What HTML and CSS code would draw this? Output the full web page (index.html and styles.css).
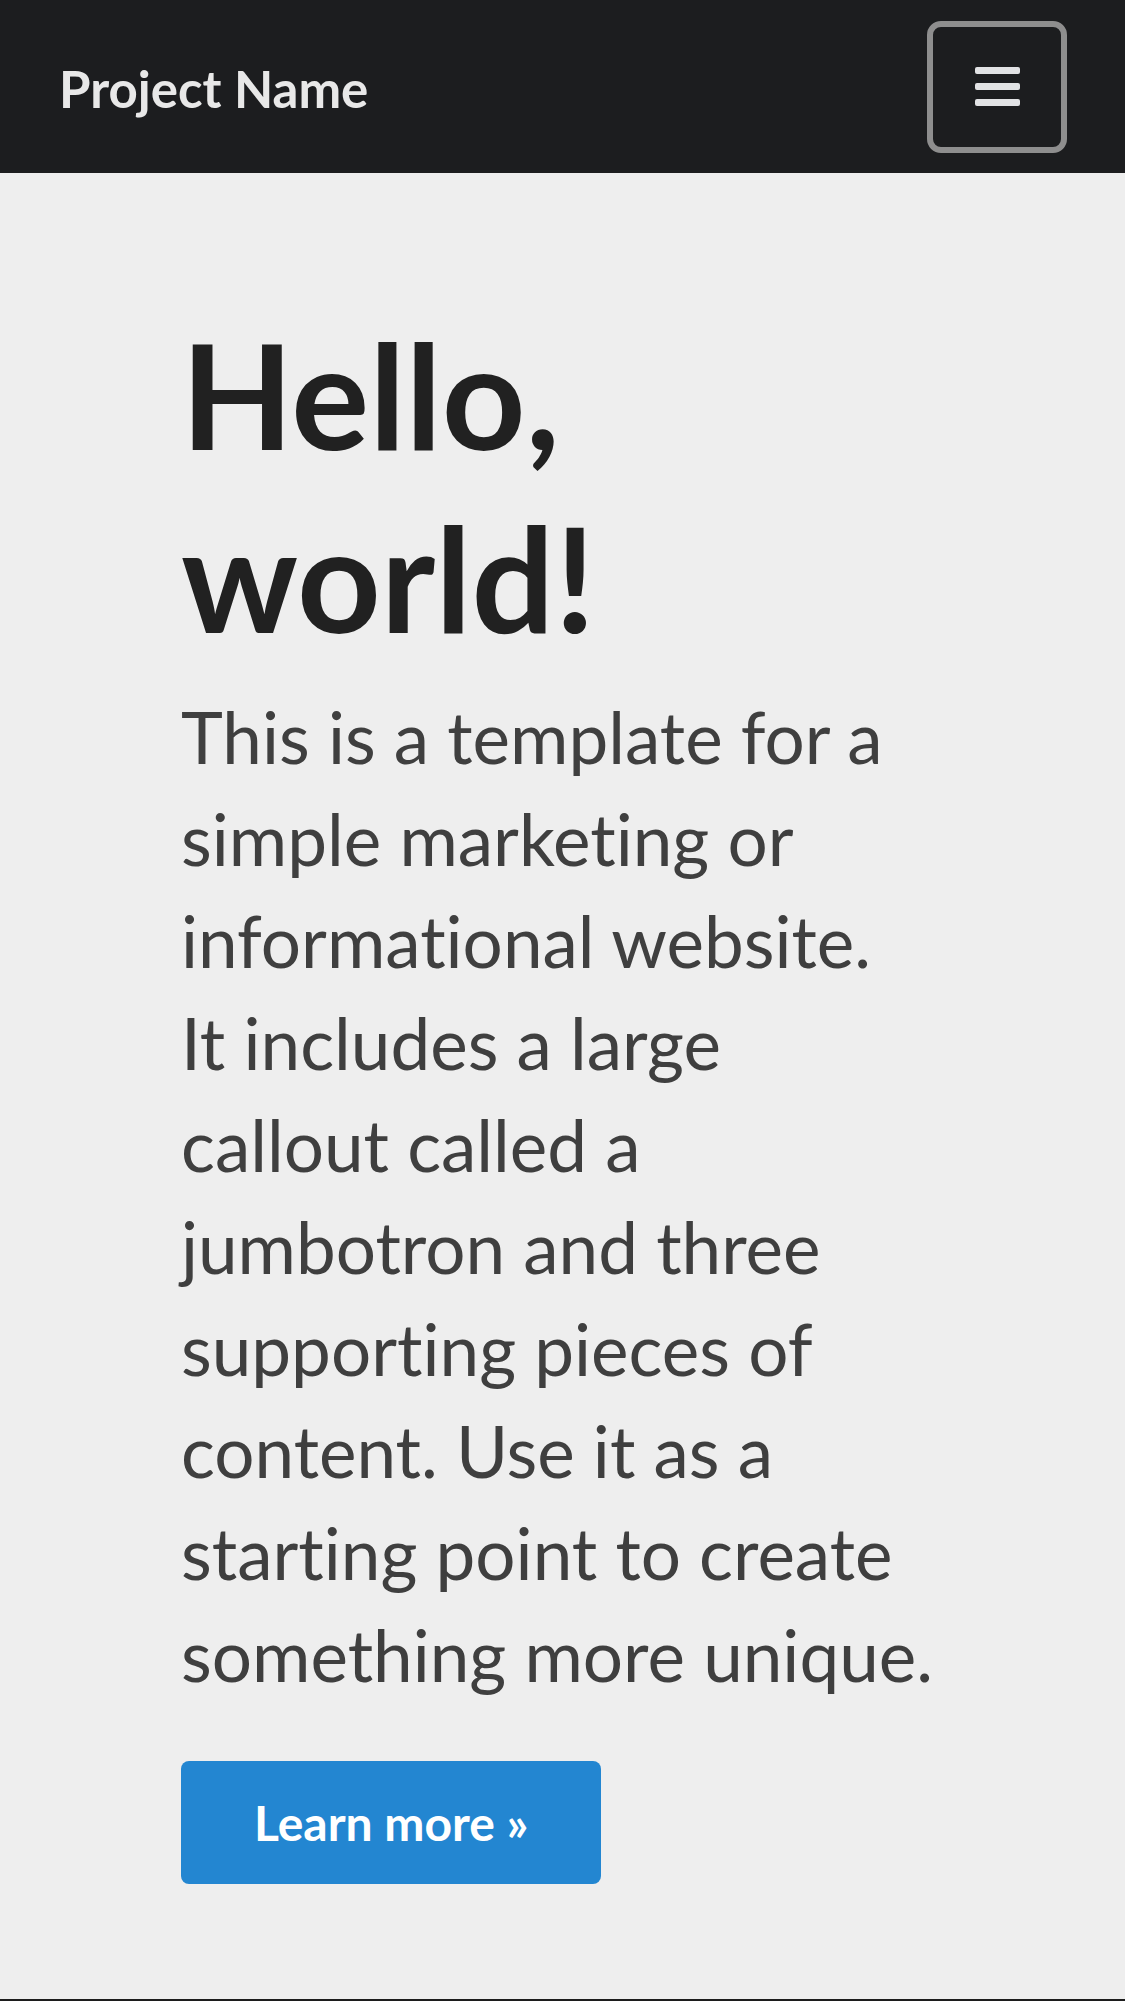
FILE: index.html
```html
<!DOCTYPE html>
<html lang="en">
<head>
<meta charset="utf-8">
<title>Project Name</title>
<link rel="stylesheet" href="styles.css">
</head>
<body>
<nav class="navbar">
  <a class="brand" href="#">Project Name</a>
  <button class="toggler" type="button" aria-label="Toggle navigation">
    <span class="bar"></span>
    <span class="bar"></span>
    <span class="bar"></span>
  </button>
</nav>
<main class="jumbotron">
  <div class="container">
    <h1 class="title">Hello, world!</h1>
    <p class="lead">This is a template for a simple marketing or informational website. It includes a large callout called a jumbotron and three supporting pieces of content. Use it as a starting point to create something more unique.</p>
    <a class="btn" href="#">Learn more &raquo;</a>
  </div>
</main>
<div class="next-section"></div>
</body>
</html>
```
FILE: styles.css
```css
html, body {
  margin: 0;
  padding: 0;
}
body {
  background: #eeeeee;
  font-family: Lato, "Open Sans", "Liberation Sans", sans-serif;
  font-variant-ligatures: none;
}
.navbar {
  height: 173px;
  box-sizing: border-box;
  background: #1c1d1f;
  display: flex;
  align-items: center;
  justify-content: space-between;
  padding: 0 58px 0 59px;
}
.brand {
  color: #e8e8e8;
  text-decoration: none;
  font-weight: 700;
  font-size: 51px;
  line-height: 60px;
  margin-top: 4px;
}
.toggler {
  width: 140px;
  height: 132px;
  box-sizing: border-box;
  border: 6px solid #8e8e8e;
  border-radius: 14px;
  background: transparent;
  display: flex;
  flex-direction: column;
  align-items: center;
  justify-content: center;
  gap: 9px;
  padding: 0;
}
.bar {
  display: block;
  width: 45px;
  height: 7px;
  border-radius: 2px;
  background: #e1e2e4;
}
.jumbotron {
  padding: 129px 0 115px;
}
.container {
  width: 752px;
  margin: 0 auto 0 181px;
}
.title {
  margin: 0 0 18px;
  font-weight: 700;
  font-size: 146px;
  line-height: 183px;
  color: #212121;
}
.lead {
  margin: 0 0 55px;
  font-size: 71px;
  line-height: 102px;
  color: #3f3f3f;
  font-weight: 400;
}
.btn {
  display: inline-block;
  background: #2386d1;
  color: #ffffff;
  text-decoration: none;
  font-weight: 700;
  font-size: 48px;
  line-height: 65px;
  padding: 29px 73px;
  border-radius: 8px;
}
.next-section {
  height: 40px;
  background: #1c1c1c;
}
```
